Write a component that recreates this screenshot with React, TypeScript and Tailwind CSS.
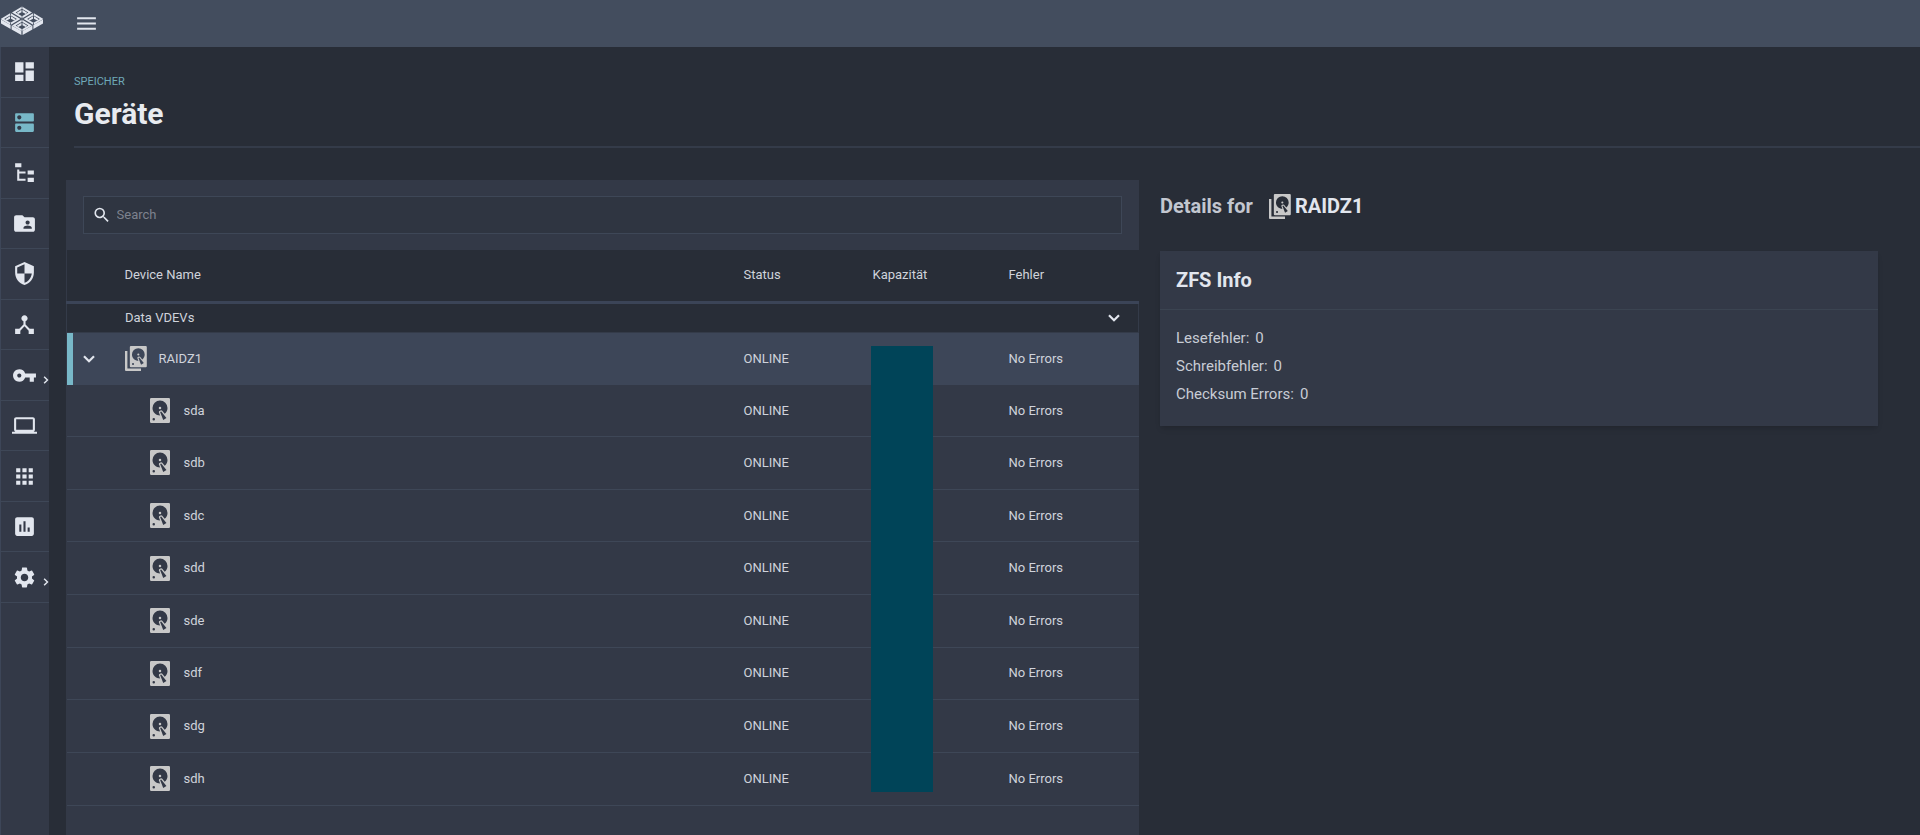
import { useState } from 'react';
import {
  MdDashboard, MdDns, MdFolderShared, MdSecurity, MdDeviceHub, MdVpnKey,
  MdLaptop, MdApps, MdInsertChart, MdSettings, MdMenu, MdSearch,
} from 'react-icons/md';

const DISK_PATH =
  'M5,2H19A1,1 0 0,1 20,3V21A1,1 0 0,1 19,22H5A1,1 0 0,1 4,21V3A1,1 0 0,1 5,2M12,4A6,6 0 0,0 6,10C6,13.31 8.69,16 12.1,16L11.22,13.77C10.95,13.29 11.11,12.68 11.59,12.4L12.45,11.9C12.93,11.63 13.54,11.79 13.82,12.27L15.74,14.69C17.12,13.59 18,11.9 18,10A6,6 0 0,0 12,4M12,9A1,1 0 0,1 13,10A1,1 0 0,1 12,11A1,1 0 0,1 11,10A1,1 0 0,1 12,9M7,18A1,1 0 0,0 6,19A1,1 0 0,0 7,20A1,1 0 0,0 8,19A1,1 0 0,0 7,18M12.09,13.27L14.58,19.58L17.17,18.08L12.95,12.77L12.09,13.27Z';

const DiskIcon = () => (
  <svg viewBox="4 2 16 20" className="h-[25px] w-5 shrink-0 fill-[#c8c8c8]" aria-hidden="true">
    <path d={DISK_PATH} />
  </svg>
);

const DiskStackIcon = () => (
  <svg viewBox="0 0 22 25" className="h-[25px] w-[22px] shrink-0 fill-[#c8c8c8]" aria-hidden="true">
    <path d={DISK_PATH} transform="translate(0.6 -2.1) scale(1.06)" />
    <path d="M0 5H2.4V22.6H16V25H1Q0 25 0 24Z" />
  </svg>
);

const TreeIcon = ({ size }: { size?: number }) => (
  <svg viewBox="0 0 24 24" width={size} height={size} fill="currentColor" aria-hidden="true">
    <path d="M3,3H9V7H3V3M15,10H21V14H15V10M15,17H21V21H15V17M13,13H7V18H13V20H7L5,20V9H7V11H13V13Z" />
  </svg>
);

const Chevron = ({ className }: { className: string }) => (
  <svg viewBox="0 0 12 8" className={className} fill="none" stroke="currentColor" strokeWidth="2.2" aria-hidden="true">
    <path d="M1 1.2L6 6.2L11 1.2" />
  </svg>
);

// Centres of the four open cubes
const CUBES = [[21, 6.5], [9.5, 13], [32.5, 13], [21, 19.5]];

const Logo = () => (
  <svg viewBox="0 0 42 29" className="h-[29px] w-[42px]" aria-hidden="true">
    <path d="M0 13.6L9.6 19V23L0 17.6ZM10.6 19.6L20.4 25V29L10.6 23.6ZM42 13.6L32.4 19V23L42 17.6ZM31.4 19.6L21.6 25V29L31.4 23.6Z" fill="#e2e6ee" />
    {CUBES.map(([x, y]) => (
      <g key={`${x}-${y}`} transform={`translate(${x} ${y})`}>
        <path d="M0 -6L10 0L0 6L-10 0Z" fill="#e2e6ee" />
        <path d="M0 -3.8L6.4 0L0 3.8L-6.4 0Z" fill="#434d5e" />
        <path d="M-0.5 -2.8V-0.2L-3.8 1.6L-5.2 0.2ZM0.5 -2.8V-0.2L3.8 1.6L5.2 0.2Z" fill="#e2e6ee" />
        <path d="M0 -6V-3.8M0 3.8V6" stroke="#434d5e" strokeWidth="0.8" />
      </g>
    ))}
  </svg>
);

const NAV = [
  { label: 'Dashboard', icon: MdDashboard },
  { label: 'Storage', icon: MdDns, active: true },
  { label: 'Datasets', icon: TreeIcon },
  { label: 'Shares', icon: MdFolderShared },
  { label: 'Data Protection', icon: MdSecurity },
  { label: 'Network', icon: MdDeviceHub },
  { label: 'Credentials', icon: MdVpnKey, more: true },
  { label: 'Virtualization', icon: MdLaptop },
  { label: 'Apps', icon: MdApps },
  { label: 'Reporting', icon: MdInsertChart },
  { label: 'System Settings', icon: MdSettings, more: true },
];

const DISKS = ['sda', 'sdb', 'sdc', 'sdd', 'sde', 'sdf', 'sdg', 'sdh'];

const ZFS_INFO = [
  { label: 'Lesefehler:', value: 0 },
  { label: 'Schreibfehler:', value: 0 },
  { label: 'Checksum Errors:', value: 0 },
];

const Sidebar = () => (
  <aside className="w-[49px] shrink-0 bg-[#333947] shadow-[inset_1px_0_#3d4658]">
    <a href="#home" aria-label="Home" className="flex h-[47px] items-start bg-[#434d5e] pt-[6px] pl-px">
      <Logo />
    </a>
    <nav className="grid h-[556px] auto-rows-fr">
      {NAV.map(({ label, icon: Icon, active, more }) => (
        <a
          key={label}
          href="#nav"
          aria-label={label}
          className={`relative flex items-center justify-center border-b border-[#3e4757] ${active ? 'text-[#78b8c8]' : 'text-[#e2e6ee]'}`}
        >
          <Icon size={25} />
          {more && <Chevron className="absolute -right-px bottom-[17px] h-[6px] w-2 -rotate-90" />}
        </a>
      ))}
    </nav>
  </aside>
);

const DeviceTable = () => {
  const [query, setQuery] = useState('');
  const [open, setOpen] = useState(true);

  return (
    <section className="flex flex-col bg-[#333947]">
      <div className="px-[17px] py-4">
        <label className="flex h-[38px] items-center gap-[5px] border border-[#3e4757] bg-[#2f3541] px-2">
          <MdSearch size={20} className="text-[#e2e6ee]" />
          <input
            type="text"
            aria-label="Search"
            placeholder="Search"
            value={query}
            onChange={(e) => setQuery(e.target.value)}
            className="w-full bg-transparent text-[13px] text-[#cfd3db] outline-none placeholder:text-[#7d828e]"
          />
        </label>
      </div>

      <div className="relative">
        <table className="w-full table-fixed border-collapse text-left text-[13px] leading-4 text-[#cfd3db]">
          <colgroup>
            <col />
            <col className="w-[129px]" />
            <col className="w-[136px]" />
            <col className="w-[130px]" />
          </colgroup>
          <thead>
            <tr className="h-[52px] border-b-[3px] border-[#3b4457] bg-[#282d37]">
              <th className="pl-[58px] font-normal">Device Name</th>
              <th className="font-normal">Status</th>
              <th className="font-normal">Kapazität</th>
              <th className="font-normal">Fehler</th>
            </tr>
          </thead>
          <tbody>
            <tr className="h-[30px] border border-[#343b49] bg-[#282d37]">
              <td colSpan={4} className="pl-[58px]">
                <div className="flex items-center justify-between pr-[18px]">
                  Data VDEVs
                  <button type="button" aria-label="Toggle group" onClick={() => setOpen(!open)}>
                    <Chevron className="h-2 w-3 text-[#e2e6ee]" />
                  </button>
                </div>
              </td>
            </tr>
            <tr className="h-[53px] bg-[#3d4658]">
              <td className="shadow-[inset_6px_0_#78b8c8]">
                <div className="flex items-center pl-4">
                  <button type="button" aria-label="Toggle RAIDZ1" onClick={() => setOpen(!open)} className="mr-[30px]">
                    <Chevron className="h-2 w-3 text-[#e2e6ee]" />
                  </button>
                  <DiskStackIcon />
                  <span className="pl-3">RAIDZ1</span>
                </div>
              </td>
              <td>ONLINE</td>
              <td />
              <td>No Errors</td>
            </tr>
          </tbody>
          {open && (
            <tbody className="h-[420px]">
              {DISKS.map((disk) => (
                <tr key={disk} className="border-b border-[#3e4757]">
                  <td>
                    <div className="flex items-center gap-[14px] pl-[83px]">
                      <DiskIcon />
                      {disk}
                    </div>
                  </td>
                  <td>ONLINE</td>
                  <td />
                  <td>No Errors</td>
                </tr>
              ))}
            </tbody>
          )}
        </table>
        {/* Capacity column cover */}
        <div className="absolute top-24 right-[206px] bottom-[14px] w-[62px] bg-[#004458]" />
      </div>
    </section>
  );
};

const Details = () => (
  <section className="pt-2">
    <h2 className="flex h-9 items-center text-xl font-bold text-[#c3c7d0]">
      Details for
      <span className="flex items-center gap-1 pl-4 text-[#e2e6ee]">
        <DiskStackIcon />
        RAIDZ1
      </span>
    </h2>
    <div className="mt-[27px] bg-[#333947] shadow-md">
      <h3 className="flex h-[59px] items-center border-b border-[#3b4451] px-4 text-xl font-bold text-[#e2e6ee]">
        ZFS Info
      </h3>
      <dl className="px-4 pt-[14px] pb-[18px] text-[15px] leading-7 text-[#c8ccd5]">
        {ZFS_INFO.map((item) => (
          <div key={item.label} className="flex gap-[6px]">
            <dt>{item.label}</dt>
            <dd>{item.value}</dd>
          </div>
        ))}
      </dl>
    </div>
  </section>
);

const App = () => (
  <div className="flex h-screen overflow-hidden bg-[#282d37] font-['Roboto',sans-serif]">
    <Sidebar />
    <div className="flex min-w-0 flex-1 flex-col">
      <header className="flex h-[47px] shrink-0 items-center bg-[#434d5e] pl-[25px]">
        <button type="button" aria-label="Menu" className="text-[#e2e6ee]">
          <MdMenu size={25} />
        </button>
      </header>
      <main className="flex flex-1 flex-col">
        <div className="ml-[25px] border-b-2 border-[#343b49] pt-[27px] pb-3">
          <p className="text-[11px] leading-4 text-[#6fa9b8] uppercase">Speicher</p>
          <h1 className="pt-1 text-3xl leading-10 font-bold text-[#e8ebf0]">Geräte</h1>
        </div>
        <div className="grid flex-1 grid-cols-[1073fr_718fr] gap-[21px] pt-8 pr-[42px] pl-[17px]">
          <DeviceTable />
          <Details />
        </div>
      </main>
    </div>
  </div>
);

export default App;
